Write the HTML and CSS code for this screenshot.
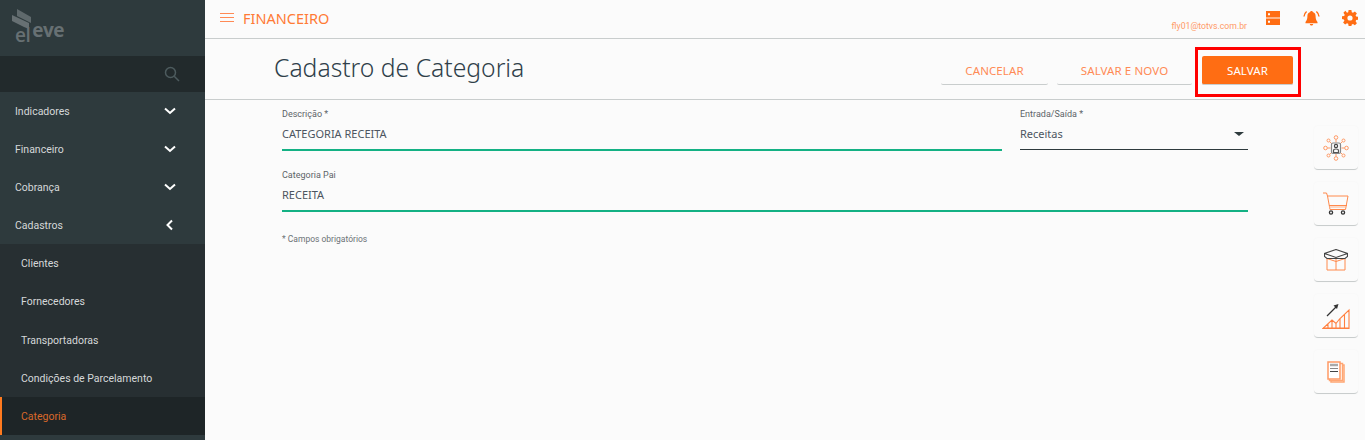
FILE: index.html
```html
<!DOCTYPE html>
<html lang="pt-BR">
<head>
	<meta charset="UTF-8">
	<title>Cadastro de Categoria</title>
	<link rel="stylesheet" href="styles.css">
</head>
<body>
	<div class="app">
		<aside class="sidebar">
			<div class="logo">
				<svg class="logo_mark" width="20" height="22" viewBox="0 0 20 22">
					<polygon points="5,0 19,8 19,14 5,7" fill="#5f696c"/>
					<polygon points="0,6 17,14 17,20 12,18 0,12" fill="#677073"/>
				</svg>
				<span class="logo_text"><b>el</b>eve</span>
			</div>
			<div class="search">
				<svg width="16" height="16" viewBox="0 0 16 16" fill="none" stroke="#4d5b5e" stroke-width="1.5">
					<circle cx="6.5" cy="6.5" r="5"/>
					<line x1="10.2" y1="10.2" x2="15" y2="15"/>
				</svg>
			</div>
			<ul class="menu">
				<li class="menu_item"><span>Indicadores</span><svg class="arrow" width="12" height="8" viewBox="0 0 12 8"><polyline points="1,1.5 6,6 11,1.5"/></svg></li>
				<li class="menu_item"><span>Financeiro</span><svg class="arrow" width="12" height="8" viewBox="0 0 12 8"><polyline points="1,1.5 6,6 11,1.5"/></svg></li>
				<li class="menu_item"><span>Cobrança</span><svg class="arrow" width="12" height="8" viewBox="0 0 12 8"><polyline points="1,1.5 6,6 11,1.5"/></svg></li>
				<li class="menu_item"><span>Cadastros</span><svg class="arrow" width="12" height="12" viewBox="0 0 12 12"><polyline points="8,1.5 3.5,6 8,10.5"/></svg></li>
				<li class="sub_item">Clientes</li>
				<li class="sub_item">Fornecedores</li>
				<li class="sub_item">Transportadoras</li>
				<li class="sub_item">Condições de Parcelamento</li>
				<li class="sub_item active">Categoria</li>
			</ul>
		</aside>

		<main class="main">
			<header class="topbar">
				<div class="burger"><i></i><i></i><i></i></div>
				<div class="module">FINANCEIRO</div>
				<div class="email">fly01@totvs.com.br</div>
				<svg class="top_icon" width="16" height="16" viewBox="0 0 16 16">
					<path fill="#ff6d13" fill-rule="evenodd" d="M1 1h14v6.4H1zM1 8.6h14V15H1zM3 3.2v2h2v-2zM3 10.8v2h2v-2z"/>
				</svg>
				<svg class="top_icon" width="17" height="16" viewBox="0 0 17 16">
					<path fill="#ff6d13" d="M8.5 1c.7 0 1.200.4 1.300 1 2 .6 2.800 2.200 2.800 4.300 0 2.500.6 4.200 1.900 5.700v1.200H2.500V12c1.300-1.500 1.900-3.200 1.900-5.700 0-2.100.8-3.700 2.800-4.300.1-.6.600-1 1.300-1zM6.800 14h3.400c0 .8-.7 1.600-1.700 1.600s-1.700-.8-1.700-1.600z"/>
					<path fill="none" stroke="#ff6d13" stroke-width="1.400" d="M3.600 1.500C2 2.800 1.200 4.300 1 6.500M13.400 1.500c1.600 1.300 2.400 2.800 2.600 5"/>
				</svg>
				<svg class="top_icon" width="16" height="16" viewBox="0 0 16 16">
					<path fill="#ff6d13" fill-rule="evenodd" d="M6.600 0h2.800l.4 2.200 1.200.5L12.900 1.400l2 2-1.300 1.900.5 1.200 2.200.4v2.800l-2.200.4-.5 1.200 1.300 1.900-2 2-1.900-1.300-1.200.5L9.400 16H6.600l-.4-2.200-1.200-.5-1.900 1.300-2-2 1.300-1.900-.5-1.200L0 9.100V6.300l2.200-.4.5-1.200-1.300-1.900 2-2L5 2.700l1.200-.5zM8 5.400a2.600 2.600 0 1 0 0 5.200 2.600 2.600 0 0 0 0-5.200z"/>
				</svg>
			</header>

			<section class="page_head">
				<h1>Cadastro de Categoria</h1>
				<div class="actions">
					<button class="btn btn_cancel">CANCELAR</button>
					<button class="btn btn_new">SALVAR E NOVO</button>
					<button class="btn btn_save">SALVAR</button>
				</div>
			</section>

			<section class="content">
				<form class="form">
					<div class="row">
						<div class="field field_grow">
							<label>Descrição *</label>
							<div class="value">CATEGORIA RECEITA</div>
						</div>
						<div class="field field_select">
							<label>Entrada/Saída *</label>
							<div class="value">Receitas<span class="caret"></span></div>
						</div>
					</div>
					<div class="row">
						<div class="field field_grow">
							<label>Categoria Pai</label>
							<div class="value">RECEITA</div>
						</div>
					</div>
					<p class="note">* Campos obrigatórios</p>
				</form>

				<div class="shortcuts">
					<div class="shortcut">
						<svg width="26" height="26" viewBox="0 0 26 26" fill="none" stroke="#ff9a66" stroke-width="1">
							<circle cx="13" cy="2.500" r="1.800"/><circle cx="13" cy="23.500" r="1.800"/>
							<circle cx="2.500" cy="13" r="1.800"/><circle cx="23.500" cy="13" r="1.800"/>
							<circle cx="5.500" cy="5.500" r="1.500"/><circle cx="20.500" cy="5.500" r="1.500"/>
							<circle cx="5.500" cy="20.500" r="1.500"/><circle cx="20.500" cy="20.500" r="1.500"/>
							<path d="M13 4.500v3M13 18.500v3M4.500 13h3M18.500 13h3M6.800 6.800l2 2M19.200 6.800l-2 2M6.800 19.200l2-2M19.200 19.200l-2-2"/>
							<rect x="8.500" y="8" width="9" height="10.500" rx="1.500" stroke="#888" stroke-width="1.200"/>
							<circle cx="13" cy="11" r="1.600" stroke="#444" stroke-width="1.200"/>
							<path d="M10.500 17.500v-2c0-1 1-1.500 2.500-1.500s2.500 .5 2.500 1.500v2z" stroke="#555" stroke-width="1.200"/>
						</svg>
					</div>
					<div class="shortcut">
						<svg width="26" height="24" viewBox="0 0 26 24" fill="none" stroke="#ff8a4d" stroke-width="1">
							<path d="M0 1h3.500l1 3h20.500l-2.500 13.500H7L4.500 4"/>
							<path d="M6 13.500h18"/>
							<path d="M6 15h17" stroke="#ffb48f"/>
							<circle cx="8" cy="20.500" r="1.600" stroke="#333" stroke-width="1.300"/>
							<circle cx="20" cy="20.500" r="1.600" stroke="#333" stroke-width="1.300"/>
						</svg>
					</div>
					<div class="shortcut">
						<svg width="24" height="22" viewBox="0 0 24 22" fill="none" stroke-width="1">
							<path d="M3 9.500V21h18V9.500M12 9.500V21M3 9.500l9 3 9-3" stroke="#ff8a4d"/>
							<path d="M12 .5 23.500 4.500v3L21 9.500H3L.5 7.500v-3zM.5 4.500 12 8.500l11.500-4" stroke="#444" stroke-width="1.100"/>
						</svg>
					</div>
					<div class="shortcut">
						<svg width="28" height="26" viewBox="0 0 28 26" fill="none" stroke-width="1.100">
							<path d="M1 25.400 10 17l4 3.500 3.500-4.500L27 7v18.400zM6 21v4M10 17v8M14 20.500V25M18 15.500V25M22.500 11.500V25" stroke="#ff8040"/>
							<path d="M1 25.400h26" stroke="#ff8040" stroke-width="1.500"/>
							<path d="M5 13 14 4" stroke="#333" stroke-width="1.300"/>
							<polygon points="16.500,1 11.500,2.500 15,6" fill="#333"/>
						</svg>
					</div>
					<div class="shortcut">
						<svg width="18" height="22" viewBox="0 0 18 22" fill="none">
							<rect x="4" y="4" width="13" height="17" stroke="#ffa673" stroke-width="1.500"/>
							<rect x="2.500" y="2.500" width="13" height="17" fill="#fff" stroke="#ffa673" stroke-width="1.500"/>
							<rect x="1" y="1" width="12" height="17" fill="#fff" stroke="#ff9a66" stroke-width="1.500"/>
							<path d="M3 4h8" stroke="#aaa" stroke-width="2.500"/>
							<path d="M3 7.500h8" stroke="#888"/>
							<path d="M3 10.500h8" stroke="#444"/>
						</svg>
					</div>
				</div>
			</section>
		</main>
	</div>
</body>
</html>
```
FILE: styles.css
```css
*, *::after {
	box-sizing: border-box;
}

body, ul, h1, p {
	margin: 0;
	padding: 0;
}

body {
	background-color: #fbfbfb;
	font-family: "Noto Sans", "Liberation Sans", sans-serif;
	overflow: hidden;
}

.app {
	display: flex;
	width: 1365px;
	height: 440px;
}

/* menu lateral */
.sidebar {
	width: 205px;
	flex-shrink: 0;
	background-color: #2e3a3d;
	color: #d5d8d9;
}

.logo {
	height: 56px;
	padding: 9px 0 0 12px;
	position: relative;
}

.logo_text {
	position: absolute;
	left: 15px;
	top: 17px;
	font-family: "Open Sans", sans-serif;
	font-size: 19px;
	font-weight: 700;
	letter-spacing: -0.5px;
	color: #677073;
}

.logo_text b {
	position: relative;
	top: 5px;
	margin-right: 2px;
	font-weight: 600;
}

.search {
	height: 36px;
	background-color: #222a2c;
	display: flex;
	justify-content: flex-end;
	align-items: center;
	padding: 0 25px 0 0;
}

.menu {
	list-style: none;
	font-family: Roboto, sans-serif;
	font-size: 10.500px;
}

.menu_item {
	height: 38px;
	display: flex;
	justify-content: space-between;
	align-items: center;
	padding: 0 29px 0 15px;
}

.arrow {
	fill: none;
	stroke: #fff;
	stroke-width: 2;
}

.sub_item {
	height: 38.300px;
	line-height: 39px;
	padding-left: 21px;
	background-color: #272f32;
}

.sub_item.active {
	background-color: #1e2527;
	border-left: 2px solid #ff7a1f;
	padding-left: 19px;
	color: #d9692a;
}

/* topo */
.main {
	flex: 1;
	min-width: 0;
	display: flex;
	flex-direction: column;
}

.topbar {
	height: 39px;
	border-bottom: 1px solid #c9cdcd;
	display: flex;
	align-items: center;
	padding: 0 7px 3px 15px;
}

.burger {
	width: 14px;
	margin-right: 9px;
}

.burger i {
	display: block;
	height: 1px;
	margin: 3px 0;
	background-color: #ff8a55;
}

.module {
	flex: 1;
	font-size: 14.500px;
	color: #ff7a35;
}

.email {
	font-family: Roboto, sans-serif;
	font-size: 8.700px;
	color: #ff9a66;
	margin: 16px 18px 0 0;
}

.top_icon {
	margin-left: 22px;
}

.top_icon:nth-of-type(1) {
	margin-left: 0;
}

/* titulo e botoes */
.page_head {
	height: 61px;
	border-bottom: 1px solid #c9cdcd;
	display: flex;
	justify-content: space-between;
	align-items: center;
	padding: 0 72px 0 69px;
}

h1 {
	font-family: "Noto Sans", sans-serif;
	font-size: 24.700px;
	font-weight: 300;
	color: #2f3f4a;
	margin-top: -3px;
}

.actions {
	display: flex;
	align-items: center;
	padding-top: 3px;
}

.btn {
	height: 29px;
	border: 0;
	border-bottom: 1px solid #c9cdcd;
	border-radius: 2px;
	background-color: #fbfbfb;
	font-family: "Noto Sans", sans-serif;
	font-size: 11.500px;
	letter-spacing: 0.1px;
	color: #ff8a55;
}

.btn_cancel {
	width: 107px;
	margin-right: 9px;
}

.btn_new {
	width: 135px;
	margin-right: 10px;
}

.btn_save {
	width: 91px;
	background-color: #ff6d13;
	color: #fff;
	position: relative;
}

/* marca vermelha em volta do botao */
.btn_save::after {
	content: "";
	position: absolute;
	left: -7px;
	top: -9px;
	width: 106px;
	height: 50px;
	border: 3px solid #f00;
}

/* formulario */
.content {
	flex: 1;
	display: flex;
	padding: 0 7px 0 77px;
}

.form {
	width: 966px;
	padding-top: 8px;
}

.row {
	display: flex;
	gap: 18px;
	height: 61px;
}

.field {
	display: flex;
	flex-direction: column;
	height: 43px;
	border-bottom: 2px solid #14b184;
}

.field_grow {
	flex: 1;
}

.field_select {
	width: 228px;
	height: 42px;
	border-bottom: 1px solid #2e3a3d;
}

label {
	font-family: Roboto, sans-serif;
	font-size: 9px;
	line-height: 12px;
	color: #5d6468;
}

.value {
	margin-top: 6px;
	font-size: 11px;
	line-height: 15px;
	color: #4c5560;
	display: flex;
	justify-content: space-between;
	align-items: center;
}

.caret {
	width: 0;
	height: 0;
	margin-right: 4px;
	border-left: 5px solid transparent;
	border-right: 5px solid transparent;
	border-top: 4px solid #2e3a3d;
}

.note {
	margin-top: 4px;
	font-family: Roboto, sans-serif;
	font-size: 8.500px;
	color: #6b7276;
}

/* atalhos da direita */
.shortcuts {
	margin-left: auto;
	padding-top: 26px;
	display: flex;
	flex-direction: column;
	gap: 12px;
}

.shortcut {
	width: 44px;
	height: 44px;
	border-bottom: 1px solid #c9cdcd;
	border-radius: 4px;
	box-shadow: 0 0 2px rgba(0, 0, 0, 0.04);
	display: flex;
	justify-content: center;
	align-items: center;
}
```
